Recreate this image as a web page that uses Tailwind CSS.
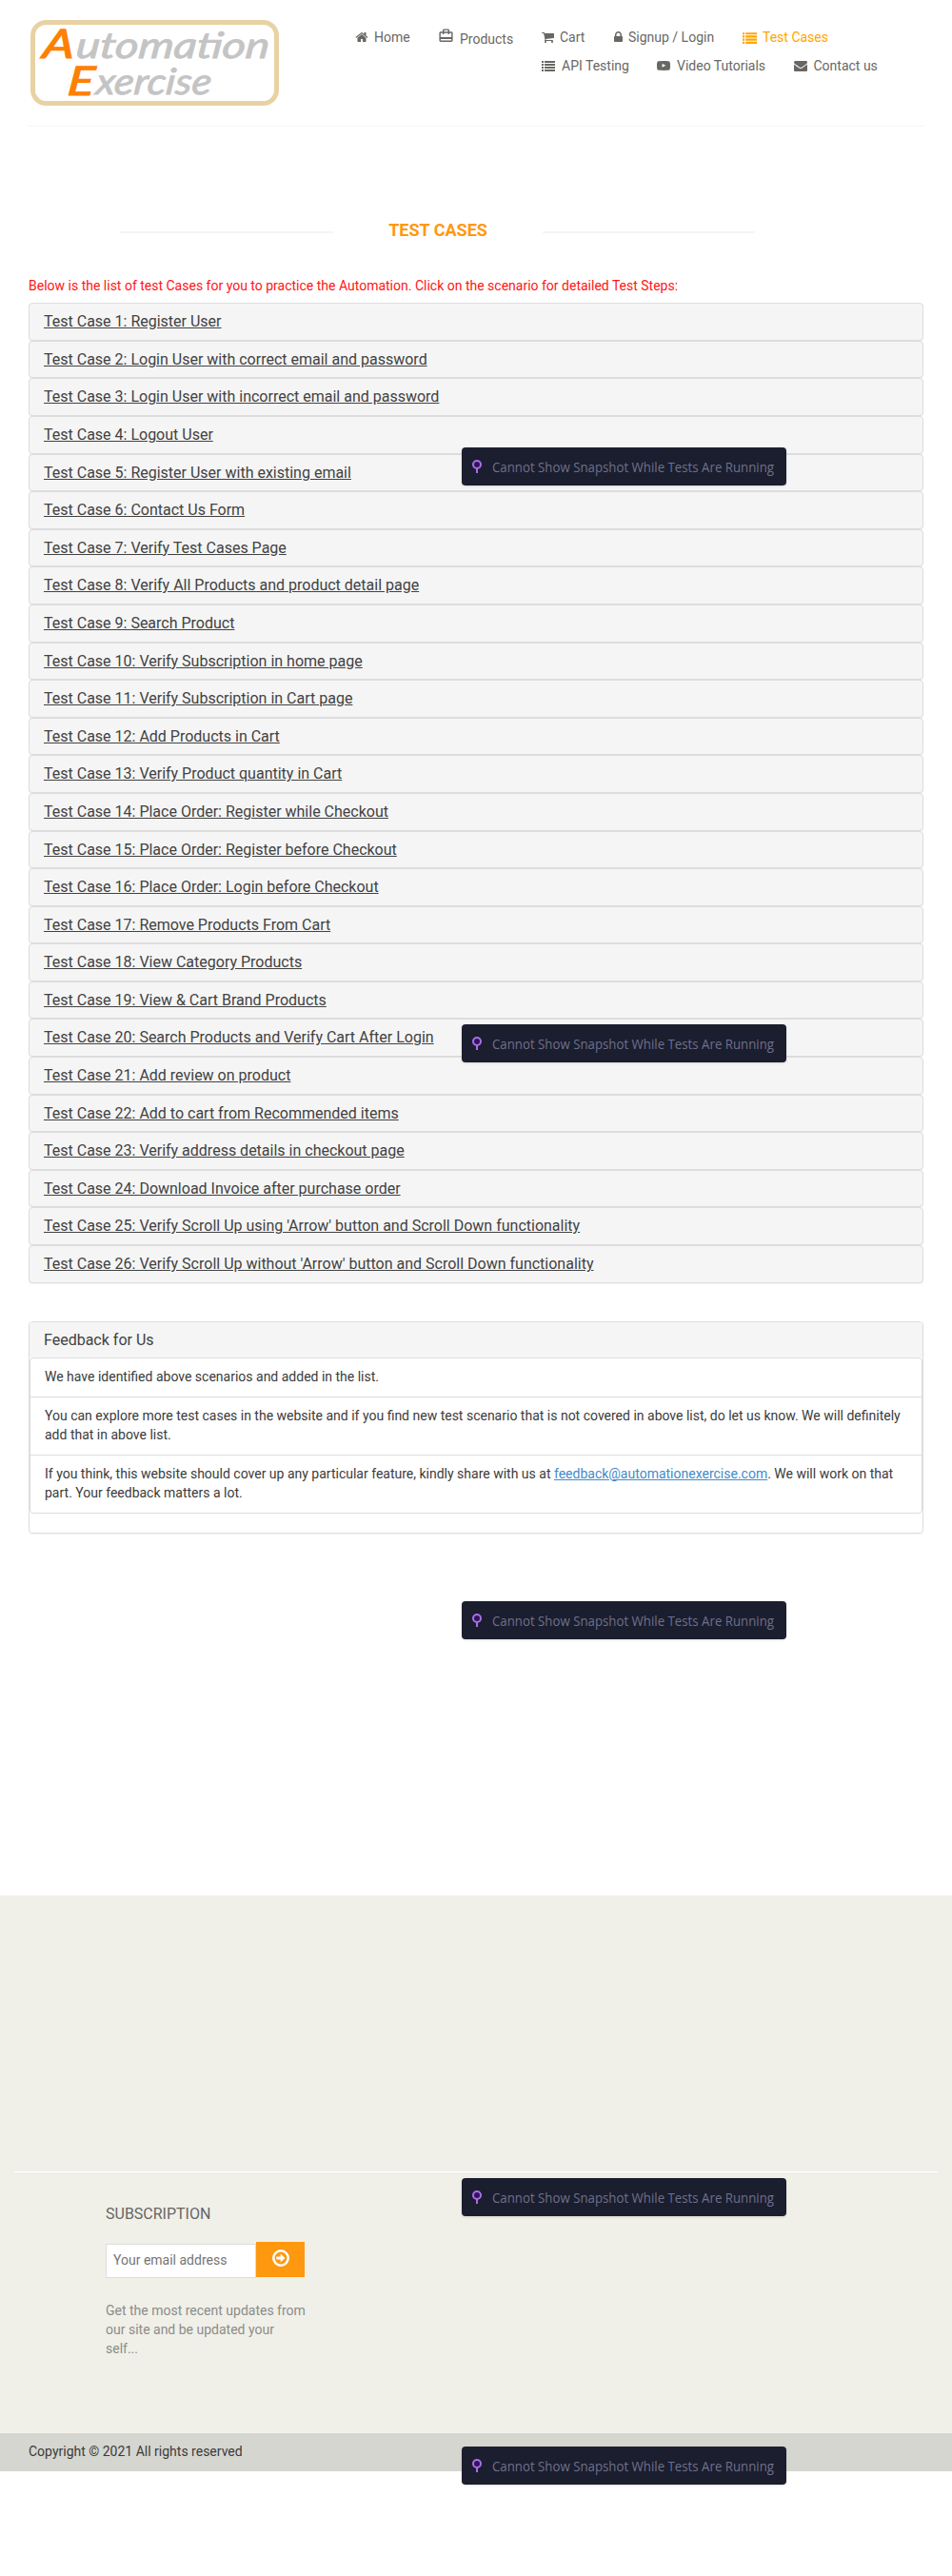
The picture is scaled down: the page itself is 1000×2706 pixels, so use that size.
<!DOCTYPE html>
<html lang="en">
<head>
<meta charset="utf-8">
<title>Automation Exercise - Test Cases</title>
<script src="https://cdn.jsdelivr.net/npm/@tailwindcss/browser@4"></script>
</head>
<body class="bg-white font-[Roboto,sans-serif] text-sm leading-5 text-[#3b3b3b]">
<svg class="hidden">
  <symbol id="list" viewBox="0 0 14 14"><path d="M0 2h2v2H0zM3 2h11v2H3zM0 5h2v2H0zM3 5h11v2H3zM0 8h2v2H0zM3 8h11v2H3zM0 11h2v2H0zM3 11h11v2H3z"/></symbol>
  <symbol id="pin" viewBox="0 0 12 16"><path d="M6 9v6" stroke="#a86fe6" stroke-width="2"/><circle cx="6" cy="6" r="4" fill="#35125f" stroke="#a86fe6" stroke-width="2"/></symbol>
</svg>
<div class="relative h-[2706px] overflow-hidden">

<header class="mx-[30px] flex h-[133px] border-b border-[#f5f5f5]">
  <a class="mt-[21px] ml-[2px] block h-[90px] w-[261px]">
    <svg class="block overflow-visible" width="261" height="90" viewBox="0 0 261 90" font-family="Lato, sans-serif" font-style="italic">
      <rect x="2.5" y="2.5" width="256" height="85" rx="14" fill="#fff" stroke="#e8d2a3" stroke-width="5"/>
      <g transform="translate(0 40) skewX(-6)" fill="#c4c4c4" stroke="#c4c4c4" stroke-width="0.9">
        <text x="12" y="0" font-size="42" fill="#ff8000" stroke="#ff8000" stroke-width="1.2" textLength="33" lengthAdjust="spacingAndGlyphs">A</text>
        <text x="47" y="0" font-size="38" textLength="203" lengthAdjust="spacingAndGlyphs">utomation</text>
      </g>
      <g transform="translate(0 78) skewX(-6)" fill="#c4c4c4" stroke="#c4c4c4" stroke-width="0.9">
        <text x="38" y="1" font-size="42" fill="#ff8000" stroke="#ff8000" stroke-width="1.2" textLength="28" lengthAdjust="spacingAndGlyphs">E</text>
        <text x="68" y="0" font-size="38" textLength="121" lengthAdjust="spacingAndGlyphs">xercise</text>
      </g>
    </svg>
  </a>
  <nav class="mt-[29px] ml-[80px] text-[#696763]">
    <ul class="flex h-5 whitespace-nowrap">
      <li class="flex w-[88px] items-center gap-[6px]"><svg class="size-[14px]" viewBox="0 0 1792 1792" fill="currentColor"><path d="M1472 992v480q0 26-19 45t-45 19h-384v-384h-256v384h-384q-26 0-45-19t-19-45v-480q0-1 .5-3t.5-3l575-474 575 474q1 2 1 6zm223-69l-62 74q-8 9-21 11h-3q-13 0-21-7l-692-577-692 577q-12 8-24 7-13-2-21-11l-62-74q-8-10-7-23.5t11-21.5l719-599q32-26 76-26t76 26l244 204v-195q0-14 9-23t23-9h192q14 0 23 9t9 23v408l219 182q10 8 11 21.5t-7 23.5z"/></svg>Home</li>
      <li class="flex w-[108px] items-start gap-[6px]"><svg class="-ml-px size-[17px]" viewBox="0 0 24 24" fill="currentColor"><path d="M20 6h-3V4c0-1.11-.89-2-2-2H9c-1.11 0-2 .89-2 2v2H4c-1.11 0-2 .89-2 2v11c0 1.11.89 2 2 2h16c1.11 0 2-.89 2-2V8c0-1.11-.89-2-2-2zM9 4h6v2H9V4zm11 15H4v-2h16v2zm0-5H4V8h3v2h2V8h6v2h2V8h3v6z"/></svg><span class="mt-[2px]">Products</span></li>
      <li class="flex w-[76px] items-center gap-[5px]"><svg class="size-[14px]" viewBox="64 0 1792 1792" fill="currentColor"><path d="M704 1536q0 52-38 90t-90 38-90-38-38-90 38-90 90-38 90 38 38 90zm896 0q0 52-38 90t-90 38-90-38-38-90 38-90 90-38 90 38 38 90zm128-1088v512q0 24-16.5 42.5t-40.5 21.5l-1044 122q13 60 13 70 0 16-24 64h920q26 0 45 19t19 45-19 45-45 19h-1024q-26 0-45-19t-19-45q0-11 8-31.5t16-36 21.5-40 15.5-29.5l-177-823h-204q-26 0-45-19t-19-45 19-45 45-19h256q16 0 28.5 6.5t19.5 15.5 13 24.5 8 26 5.5 29.5 4.5 26h1201q26 0 45 19t19 45z"/></svg>Cart</li>
      <li class="flex w-[135px] items-center gap-[6px]"><svg class="h-[14px] w-[9px]" viewBox="320 0 1152 1792" fill="currentColor"><path d="M640 768h512v-192q0-106-75-181t-181-75-181 75-75 181v192zm832 96v576q0 40-28 68t-68 28h-960q-40 0-68-28t-28-68v-576q0-40 28-68t68-28h32v-192q0-184 132-316t316-132 316 132 132 316v192h32q40 0 68 28t28 68z"/></svg>Signup / Login</li>
      <li class="flex items-center gap-[6px] text-[#ffa500]"><svg class="size-[15px]" fill="currentColor"><use href="#list"/></svg>Test Cases</li>
    </ul>
    <ul class="mt-[10px] ml-[196px] flex h-5 whitespace-nowrap">
      <li class="flex w-[121px] items-center gap-[7px]"><svg class="size-[14px]" fill="currentColor"><use href="#list"/></svg>API Testing</li>
      <li class="flex w-[143.5px] items-center gap-[7px]"><svg class="size-[14px]" viewBox="0 0 1792 1792" fill="currentColor"><path d="M711 1128l484-250-484-253v503zm185-862q168 0 324.5 4.5t229.5 9.5l73 4q1 0 17 1.5t23 3 23.5 4.5 28.5 8 28 13 31 19.5 29 26.5q6 6 15.5 18.5t29 58.5 26.5 101q8 64 12.5 136.5t5.5 113.5v176q1 145-18 290-7 55-25 99.5t-32 61.5l-14 17q-14 15-29 26.5t-31 19-28 12.5-28.5 8-24 4.5-23 3-16.5 1.5q-251 19-627 19-207-2-359.5-6.5t-200.5-7.5l-49-4-36-4q-36-5-54.5-10t-51-21-56.5-41q-6-6-15.5-18.5t-29-58.5-26.5-101q-8-64-12.5-136.5t-5.5-113.5v-176q-1-145 18-290 7-55 25-99.5t32-61.5l14-17q14-15 29-26.5t31-19.5 28-13 28.5-8 23.5-4.5 23-3 17-1.5q251-18 627-18z"/></svg>Video Tutorials</li>
      <li class="flex items-center gap-[7px]"><svg class="size-[14px]" viewBox="0 0 1792 1792" fill="currentColor"><path d="M1792 710v794q0 66-47 113t-113 47h-1472q-66 0-113-47t-47-113v-794q44 49 101 87 362 246 497 345 57 42 92.5 65.5t94.5 48 110 24.5h2q51 0 110-24.5t94.5-48 92.5-65.5q170-123 498-345 57-39 100-87zm0-294q0 79-49 151t-122 123q-376 261-468 325-10 7-42.5 31t-54 38.5-52 32.5-57.5 27-50 9h-2q-23 0-50-9t-57.5-27-52-32.5-54-38.5-42.5-31q-91-64-262-182.5t-205-142.5q-62-42-117-115.5t-55-136.5q0-78 41.5-130t118.5-52h1472q65 0 112.5 47t47.5 113z"/></svg>Contact us</li>
    </ul>
  </nav>
</header>

<main class="mx-[30px]">
  <div class="flex items-center pt-[99px]">
    <div class="mt-[4px] ml-[96px] h-[2px] w-[224px] bg-[#f5f5f5]"></div>
    <h2 class="w-[220px] text-center text-lg leading-5 font-bold text-[#fe980f]">TEST CASES</h2>
    <div class="mt-[4px] h-[2px] w-[223px] bg-[#f5f5f5]"></div>
  </div>
  <p class="mt-[38px] text-[#ff1414]">Below is the list of test Cases for you to practice the Automation. Click on the scenario for detailed Test Steps:</p>

  <ul class="mt-[8.2px] text-base leading-[17.6px] text-[#424242] underline [&>li]:h-[39.6px] [&>li]:rounded-[4px] [&>li]:border [&>li]:border-[#ddd] [&>li]:bg-[#f5f5f5] [&>li]:px-[15px] [&>li]:py-[10px] [&>li]:shadow-[0_1px_1px_rgba(0,0,0,0.05)]">
    <li>Test Case 1: Register User</li>
    <li>Test Case 2: Login User with correct email and password</li>
    <li>Test Case 3: Login User with incorrect email and password</li>
    <li>Test Case 4: Logout User</li>
    <li>Test Case 5: Register User with existing email</li>
    <li>Test Case 6: Contact Us Form</li>
    <li>Test Case 7: Verify Test Cases Page</li>
    <li>Test Case 8: Verify All Products and product detail page</li>
    <li>Test Case 9: Search Product</li>
    <li>Test Case 10: Verify Subscription in home page</li>
    <li>Test Case 11: Verify Subscription in Cart page</li>
    <li>Test Case 12: Add Products in Cart</li>
    <li>Test Case 13: Verify Product quantity in Cart</li>
    <li>Test Case 14: Place Order: Register while Checkout</li>
    <li>Test Case 15: Place Order: Register before Checkout</li>
    <li>Test Case 16: Place Order: Login before Checkout</li>
    <li>Test Case 17: Remove Products From Cart</li>
    <li>Test Case 18: View Category Products</li>
    <li>Test Case 19: View &amp; Cart Brand Products</li>
    <li>Test Case 20: Search Products and Verify Cart After Login</li>
    <li>Test Case 21: Add review on product</li>
    <li>Test Case 22: Add to cart from Recommended items</li>
    <li>Test Case 23: Verify address details in checkout page</li>
    <li>Test Case 24: Download Invoice after purchase order</li>
    <li>Test Case 25: Verify Scroll Up using 'Arrow' button and Scroll Down functionality</li>
    <li>Test Case 26: Verify Scroll Up without 'Arrow' button and Scroll Down functionality</li>
  </ul>

  <section class="mt-[40px] rounded-[4px] border border-[#ddd] pb-5 shadow-[0_1px_1px_rgba(0,0,0,0.05)]">
    <h4 class="h-[37px] rounded-t-[3px] bg-[#f5f5f5] px-[15px] py-[10px] text-base leading-[17.6px] text-[#424242]">Feedback for Us</h4>
    <ul class="divide-y divide-[#ddd] rounded-[4px] border border-[#ddd] [&>li]:px-[15px] [&>li]:pt-[9px] [&>li]:pb-[11px]">
      <li>We have identified above scenarios and added in the list.</li>
      <li>You can explore more test cases in the website and if you find new test scenario that is not covered in above list, do let us know. We will definitely add that in above list.</li>
      <li>If you think, this website should cover up any particular feature, kindly share with us at <a class="text-[#428bca] underline">feedback@automationexercise.com</a>. We will work on that part. Your feedback matters a lot.</li>
    </ul>
  </section>
</main>

<footer class="mt-[380.2px] bg-[#f0f0e9]">
  <div class="mx-[15px] h-[291px] border-b border-white"></div>
  <div class="h-[274px] pt-[34px] pl-[111px]">
    <h2 class="text-base leading-5 text-[#666663]">SUBSCRIPTION</h2>
    <div class="mt-[19px] flex h-[38px] items-start">
      <div class="mt-[2px] h-[36px] w-[158px] border border-[#ddd] bg-white pt-[6px] pl-[7px] text-[#757575]">Your email address</div>
      <div class="flex h-[37px] w-[51px] justify-center bg-[#fe980f] pt-[8px]">
        <svg class="size-[18px]" viewBox="0 0 18 18" fill="none"><circle cx="9" cy="9" r="7.7" stroke="#fff" stroke-width="2.5"/><path d="M4.3 7.5h4.4V4.6L13.5 9l-4.8 4.4v-2.9H4.3z" fill="#fff"/></svg>
      </div>
    </div>
    <p class="mt-[24px] w-[220px] text-[#8c8c88]">Get the most recent updates from<br>our site and be updated your<br>self...</p>
  </div>
  <div class="h-10 bg-[#d6d6d0] px-[30px] pt-[9px]">Copyright © 2021 All rights reserved</div>
</footer>

<div class="absolute top-[470px] left-[485px] flex h-10 w-[341px] rounded-[4px] bg-[#1b1e2e] pl-[10px] font-['Open_Sans',sans-serif] whitespace-nowrap text-[#6f708c] shadow-sm"><svg class="mt-[12px] h-4 w-3"><use href="#pin"/></svg><span class="mt-[11px] ml-[10px]"><svg class="block overflow-visible" width="297" height="20"><text x="0" y="15" font-size="14" fill="currentColor" textLength="296" lengthAdjust="spacingAndGlyphs">Cannot Show Snapshot While Tests Are Running</text></svg></span></div>
<div class="absolute top-[1076px] left-[485px] flex h-10 w-[341px] rounded-[4px] bg-[#1b1e2e] pl-[10px] font-['Open_Sans',sans-serif] whitespace-nowrap text-[#6f708c] shadow-sm"><svg class="mt-[12px] h-4 w-3"><use href="#pin"/></svg><span class="mt-[11px] ml-[10px]"><svg class="block overflow-visible" width="297" height="20"><text x="0" y="15" font-size="14" fill="currentColor" textLength="296" lengthAdjust="spacingAndGlyphs">Cannot Show Snapshot While Tests Are Running</text></svg></span></div>
<div class="absolute top-[1682px] left-[485px] flex h-10 w-[341px] rounded-[4px] bg-[#1b1e2e] pl-[10px] font-['Open_Sans',sans-serif] whitespace-nowrap text-[#6f708c] shadow-sm"><svg class="mt-[12px] h-4 w-3"><use href="#pin"/></svg><span class="mt-[11px] ml-[10px]"><svg class="block overflow-visible" width="297" height="20"><text x="0" y="15" font-size="14" fill="currentColor" textLength="296" lengthAdjust="spacingAndGlyphs">Cannot Show Snapshot While Tests Are Running</text></svg></span></div>
<div class="absolute top-[2288px] left-[485px] flex h-10 w-[341px] rounded-[4px] bg-[#1b1e2e] pl-[10px] font-['Open_Sans',sans-serif] whitespace-nowrap text-[#6f708c] shadow-sm"><svg class="mt-[12px] h-4 w-3"><use href="#pin"/></svg><span class="mt-[11px] ml-[10px]"><svg class="block overflow-visible" width="297" height="20"><text x="0" y="15" font-size="14" fill="currentColor" textLength="296" lengthAdjust="spacingAndGlyphs">Cannot Show Snapshot While Tests Are Running</text></svg></span></div>
<div class="absolute top-[2570px] left-[485px] flex h-10 w-[341px] rounded-[4px] bg-[#1b1e2e] pl-[10px] font-['Open_Sans',sans-serif] whitespace-nowrap text-[#6f708c] shadow-sm"><svg class="mt-[12px] h-4 w-3"><use href="#pin"/></svg><span class="mt-[11px] ml-[10px]"><svg class="block overflow-visible" width="297" height="20"><text x="0" y="15" font-size="14" fill="currentColor" textLength="296" lengthAdjust="spacingAndGlyphs">Cannot Show Snapshot While Tests Are Running</text></svg></span></div>
</div>
</body>
</html>
